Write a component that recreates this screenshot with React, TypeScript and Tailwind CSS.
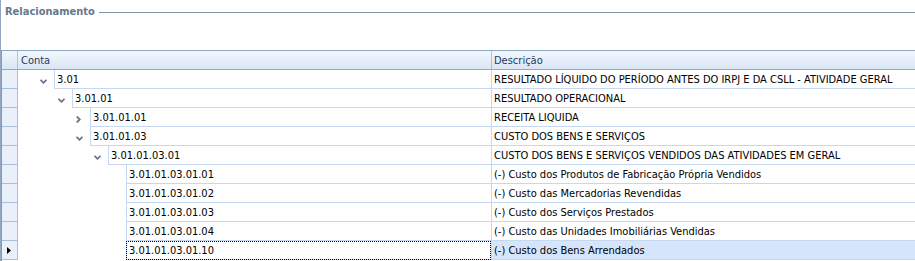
import React from "react";

type Row = {
  level: number;
  conta: string;
  descricao: string;
  node: "open" | "closed" | "leaf";
  focused?: boolean;
};

const rows: Row[] = [
  { level: 0, conta: "3.01", descricao: "RESULTADO LÍQUIDO DO PERÍODO ANTES DO IRPJ E DA CSLL - ATIVIDADE GERAL", node: "open" },
  { level: 1, conta: "3.01.01", descricao: "RESULTADO OPERACIONAL", node: "open" },
  { level: 2, conta: "3.01.01.01", descricao: "RECEITA LIQUIDA", node: "closed" },
  { level: 2, conta: "3.01.01.03", descricao: "CUSTO DOS BENS E SERVIÇOS", node: "open" },
  { level: 3, conta: "3.01.01.03.01", descricao: "CUSTO DOS BENS E SERVIÇOS VENDIDOS DAS ATIVIDADES EM GERAL", node: "open" },
  { level: 4, conta: "3.01.01.03.01.01", descricao: "(-) Custo dos Produtos de Fabricação Própria Vendidos", node: "leaf" },
  { level: 4, conta: "3.01.01.03.01.02", descricao: "(-) Custo das Mercadorias Revendidas", node: "leaf" },
  { level: 4, conta: "3.01.01.03.01.03", descricao: "(-) Custo dos Serviços Prestados", node: "leaf" },
  { level: 4, conta: "3.01.01.03.01.04", descricao: "(-) Custo das Unidades Imobiliárias Vendidas", node: "leaf" },
  { level: 4, conta: "3.01.01.03.01.10", descricao: "(-) Custo dos Bens Arrendados", node: "leaf", focused: true },
];

// indent before the cell, per tree level
const indentClass = ["w-[36px]", "w-[54px]", "w-[72px]", "w-[90px]", "w-[108px]"];

const Chevron = ({ open }: { open: boolean }) =>
  open ? (
    <svg width="7" height="5" viewBox="0 0 7 5" className="block">
      <path d="M0.5 0.8 L3.5 3.8 L6.5 0.8" fill="none" stroke="#66758c" strokeWidth="1.8" />
    </svg>
  ) : (
    <svg width="5" height="7" viewBox="0 0 5 7" className="block">
      <path d="M0.8 0.5 L3.8 3.5 L0.8 6.5" fill="none" stroke="#66758c" strokeWidth="1.8" />
    </svg>
  );

const TreeRow = ({ row }: { row: Row }) => (
  <div className="flex h-[19px]">
    <div className="w-[16px] shrink-0 bg-[#e9f0fa] border-r border-b border-[#a9bfdc] flex items-center pl-[5px] pt-[1px]">
      {row.focused && (
        <svg width="4" height="7" viewBox="0 0 4 7" className="block">
          <path d="M0 0 L4 3.5 L0 7 Z" fill="#000" />
        </svg>
      )}
    </div>
    <div className="w-[473px] shrink-0 flex">
      <div className={`${indentClass[row.level]} shrink-0 flex justify-end`}>
        {row.node !== "leaf" && (
          <div className="w-[18px] flex items-center pl-[4px] pt-[3px]">
            <Chevron open={row.node === "open"} />
          </div>
        )}
      </div>
      <div
        className={`flex-1 flex items-center pl-[2px] pt-[3px] border-l border-b border-[#c6d8ef] ${
          row.focused ? "outline outline-1 outline-dotted outline-black -outline-offset-1" : ""
        }`}
      >
        {row.conta}
      </div>
    </div>
    <div
      className={`flex-1 flex items-center pl-[2px] pt-[3px] border-l border-b border-[#c6d8ef] whitespace-nowrap ${
        row.focused ? "bg-[#d5e5fb]" : ""
      }`}
    >
      {row.descricao}
    </div>
  </div>
);

export default function App() {
  return (
    <div
      className="w-[915px] h-[261px] bg-white overflow-hidden text-[11px] text-black border-l border-[#93a6be]"
      style={{ fontFamily: '"DejaVu Sans", Tahoma, sans-serif', fontStretch: "condensed" }}
    >
      {/* group box caption */}
      <div className="h-[50px]">
        <div className="h-[25px] flex items-center pl-[4px] gap-[4px]">
          <span className="font-bold text-[#66778e]">Relacionamento</span>
          <div className="flex-1 h-px bg-[#8393a8]" />
        </div>
      </div>

      {/* tree list */}
      <div className="border-l border-[#7f9cc2] h-[211px]">
        <div className="flex h-[20px] border-t border-b border-[#8fa9cb] bg-gradient-to-b from-[#f3f7fc] to-[#dae6f5] text-[#1e3a64]">
          <div className="w-[16px] shrink-0 border-r border-[#a9bfdc]" />
          <div className="w-[473px] shrink-0 flex items-center pl-[3px] pt-[2px]">Conta</div>
          <div className="flex-1 flex items-center pl-[2px] pt-[2px] border-l border-[#a9bfdc]">Descrição</div>
        </div>
        {rows.map((r) => (
          <TreeRow key={r.conta} row={r} />
        ))}
      </div>
    </div>
  );
}
